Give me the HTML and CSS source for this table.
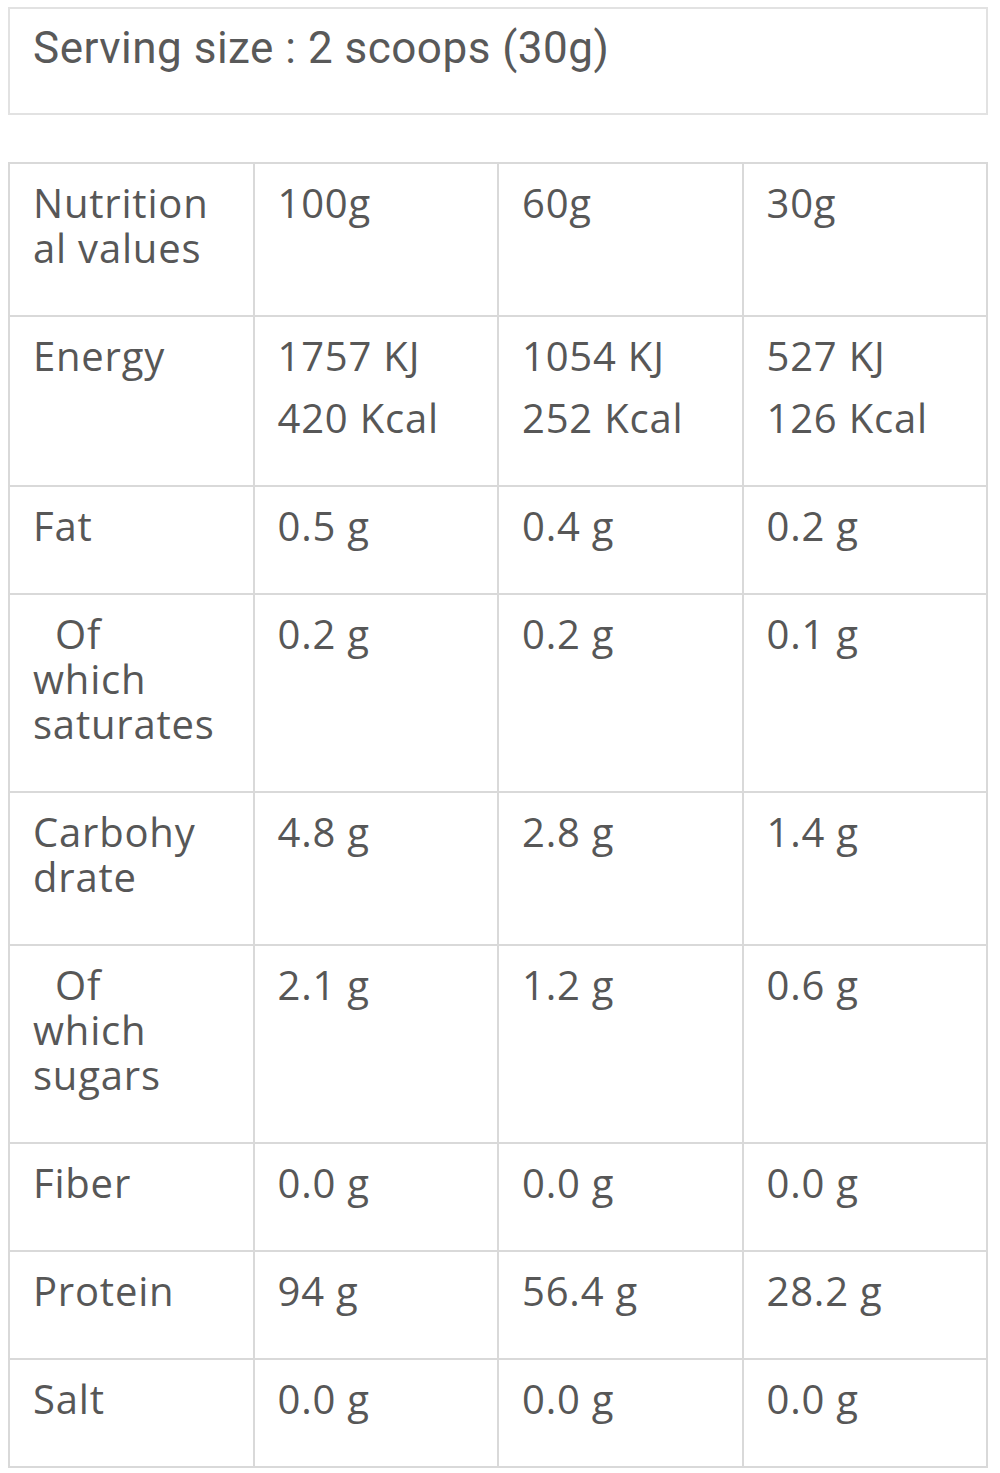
FILE: index.html
```html
<!DOCTYPE html>
<html>
<head>
<meta charset="utf-8">
<link rel="stylesheet" href="styles.css">
</head>
<body>
<div class="serving">Serving size : 2 scoops (30g)</div>
<table class="nutri">
  <tr><td class="label">Nutrition<br>al values</td><td>100g</td><td>60g</td><td>30g</td></tr>
  <tr><td class="label">Energy</td>
    <td><div>1757 KJ</div><div class="second">420 Kcal</div></td>
    <td><div>1054 KJ</div><div class="second">252 Kcal</div></td>
    <td><div>527 KJ</div><div class="second">126 Kcal</div></td></tr>
  <tr><td class="label">Fat</td><td>0.5 g</td><td>0.4 g</td><td>0.2 g</td></tr>
  <tr><td class="label"><span class="indent">Of</span><br>which<br>saturates</td><td>0.2 g</td><td>0.2 g</td><td>0.1 g</td></tr>
  <tr><td class="label">Carbohy<br>drate</td><td>4.8 g</td><td>2.8 g</td><td>1.4 g</td></tr>
  <tr><td class="label"><span class="indent">Of</span><br>which<br>sugars</td><td>2.1 g</td><td>1.2 g</td><td>0.6 g</td></tr>
  <tr><td class="label">Fiber</td><td>0.0 g</td><td>0.0 g</td><td>0.0 g</td></tr>
  <tr><td class="label">Protein</td><td>94 g</td><td>56.4 g</td><td>28.2 g</td></tr>
  <tr><td class="label">Salt</td><td>0.0 g</td><td>0.0 g</td><td>0.0 g</td></tr>
</table>
</body>
</html>
```
FILE: styles.css
```css
html, body {
  background: #ffffff;
}
body {
  margin: 7px 8px;
  color: #575757;
}
.serving {
  width: 980px;
  box-sizing: border-box;
  border: 2px solid #e2e2e2;
  font-family: Roboto, "Liberation Sans", sans-serif;
  font-size: 44px;
  letter-spacing: 0.5px;
  line-height: 48px;
  padding: 15px 24px 41px 23px;
  color: #595959;
}
.nutri {
  margin-top: 47px;
  width: 980px;
  border-collapse: collapse;
  table-layout: fixed;
  font-family: "Open Sans", Lato, sans-serif;
  font-size: 40px;
  letter-spacing: 0.8px;
  line-height: 45px;
}
.nutri td {
  border: 2px solid #d9d9d9;
  vertical-align: top;
  padding: 16px 20px 45px 23px;
  white-space: nowrap;
}
.nutri .second {
  margin-top: 17px;
}
.indent {
  padding-left: 22px;
}
```
